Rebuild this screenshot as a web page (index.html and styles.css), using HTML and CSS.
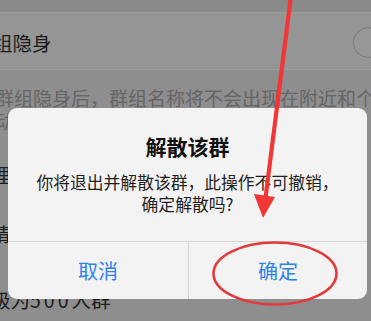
FILE: index.html
```html
<!DOCTYPE html>
<html lang="zh-CN">
<head>
<meta charset="utf-8">
<link rel="stylesheet" href="styles.css">
</head>
<body>
<div class="page">
  <div class="topband"></div>
  <div class="row">
    <span class="row-label">组隐身</span>
    <span class="knob"></span>
  </div>
  <div class="desc">
    <p class="desc-line">群组隐身后，群组名称将不会出现在附近和个</p>
    <p class="desc-line">动态中</p>
  </div>
  <div class="item item-a"><span class="item-label">理</span></div>
  <div class="item item-b"><span class="item-label">请</span></div>
  <div class="item item-c"><span class="item-label">级为<span class="num">500</span>人群</span></div>
</div>

<div class="alert">
  <div class="alert-body">
    <div class="alert-title">解散该群</div>
    <div class="alert-msg">你将退出并解散该群，此操作不可撤销，<br>确定解散吗?</div>
  </div>
  <div class="alert-actions">
    <div class="alert-btn">取消</div>
    <div class="alert-btn">确定</div>
  </div>
</div>

<svg class="annot" width="371" height="321" viewBox="0 0 371 321">
  <line x1="291" y1="-4" x2="265.5" y2="198" stroke="#f23636" stroke-width="4.2" stroke-linecap="round"/>
  <polygon points="254,194 275,197 263,218" fill="#f23636"/>
  <ellipse cx="275" cy="273.5" rx="61.5" ry="31" fill="none" stroke="#e23a3c" stroke-width="2.6"/>
</svg>
</body>
</html>
```
FILE: styles.css
```css
* { box-sizing: border-box; margin: 0; padding: 0; }
html, body {
  width: 371px;
  height: 321px;
  overflow: hidden;
  background: #8e8e8e;
  font-family: "Noto Sans CJK SC", "Noto Sans", sans-serif;
}
.page {
  display: flex;
  flex-direction: column;
  width: 371px;
  height: 321px;
  overflow: hidden;
}
.topband {
  height: 13px;
  background: #8a8a8a;
  border-bottom: 1px solid #9a9a9a;
  flex: none;
}
.row {
  height: 57px;
  padding-top: 2px;
  background: #959595;
  border-bottom: 1px solid #9c9c9c;
  display: flex;
  align-items: center;
  justify-content: space-between;
  overflow: hidden;
  flex: none;
}
.row-label {
  font-size: 19.5px;
  color: #1c1c1c;
  margin-left: -7px;
  white-space: nowrap;
}
.knob {
  width: 31px;
  height: 31px;
  border-radius: 50%;
  border: 1px solid #7b7b7b;
  background: #979797;
  margin-right: -13px;
  flex: none;
}
.desc {
  padding-top: 16px;
  height: 78px;
  overflow: hidden;
  flex: none;
}
.desc-line {
  font-size: 19px;
  line-height: 23px;
  color: #656565;
  white-space: nowrap;
  margin-left: -5px;
}
.item {
  display: flex;
  align-items: center;
  overflow: hidden;
  flex: none;
}
.item-a { height: 52px; }
.item-b { height: 66px; }
.item-c { height: 66px; }
.item-label {
  font-size: 19.5px;
  color: #1c1c1c;
  white-space: nowrap;
  margin-left: -9px;
}
.num {
  letter-spacing: 3px;
}

.alert {
  position: absolute;
  left: 8px;
  top: 108px;
  width: 359px;
  height: 191px;
  background: #f3f3f3;
  border-radius: 9px;
  display: flex;
  flex-direction: column;
  overflow: hidden;
}
.alert-body {
  height: 134px;
  border-bottom: 1px solid #d4d4d4;
  padding-top: 24px;
  text-align: center;
}
.alert-title {
  font-size: 21px;
  font-weight: 700;
  line-height: 28px;
  color: #111;
}
.alert-msg {
  margin-top: 11px;
  font-size: 16.8px;
  line-height: 22px;
  color: #1e1e1e;
}
.alert-actions {
  flex: 1;
  display: grid;
  grid-template-columns: 180px 1fr;
}
.alert-btn {
  display: flex;
  align-items: center;
  justify-content: center;
  font-size: 20px;
  color: #2f80ea;
}
.alert-btn + .alert-btn {
  border-left: 1px solid #d4d4d4;
}
.annot {
  position: absolute;
  left: 0;
  top: 0;
  pointer-events: none;
}
```
